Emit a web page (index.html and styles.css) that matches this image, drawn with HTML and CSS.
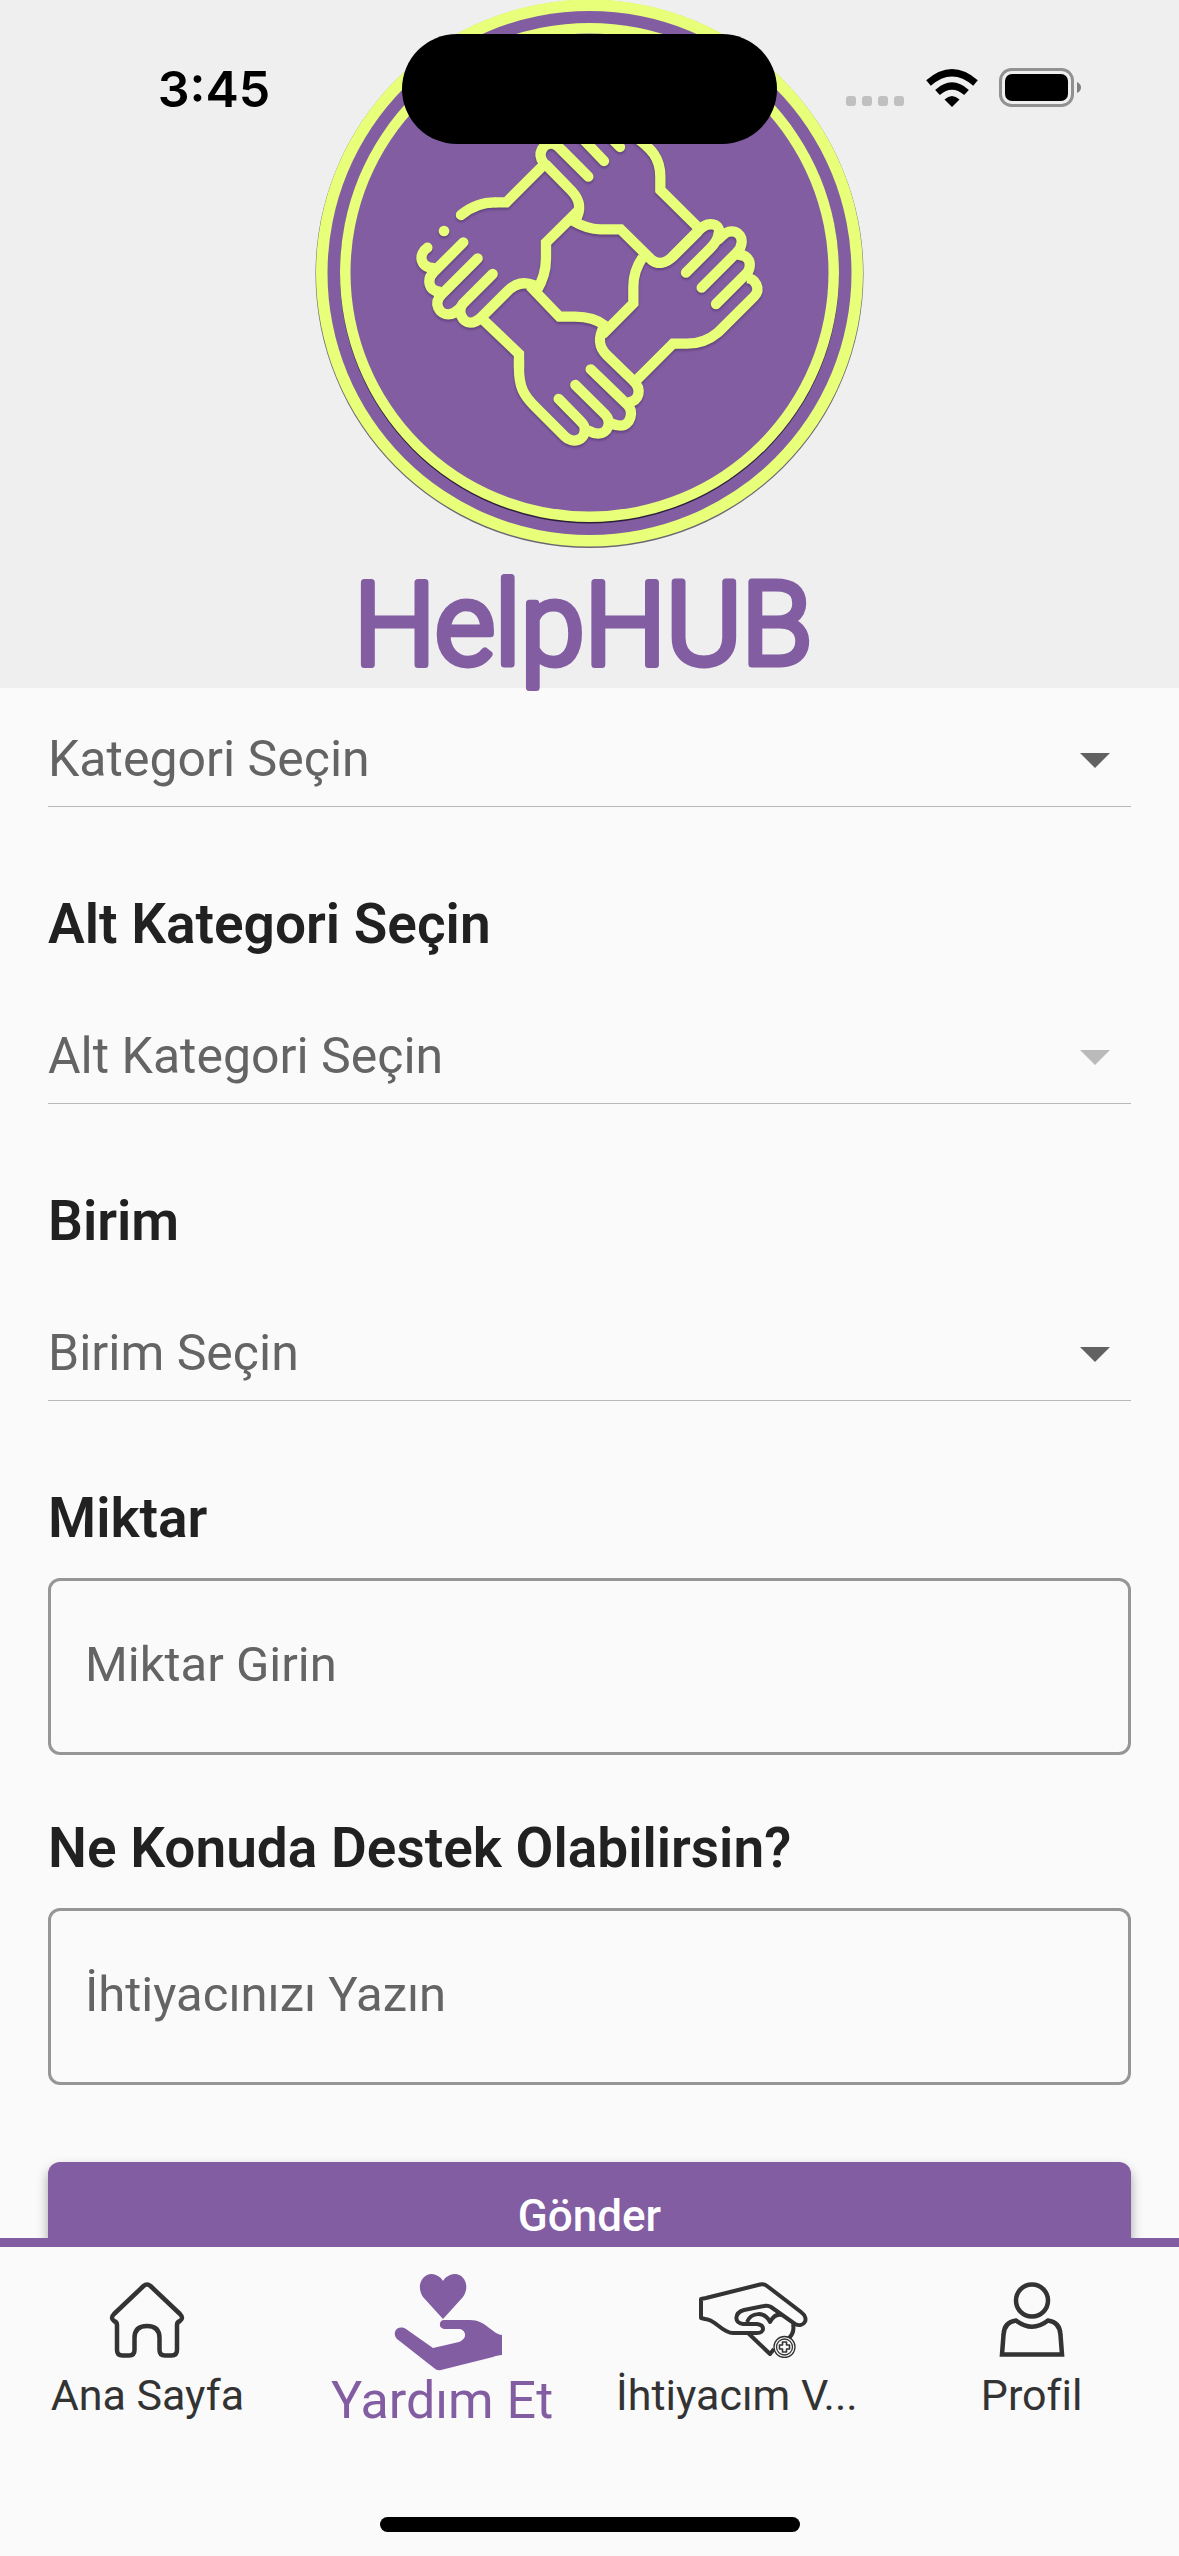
FILE: index.html
```html
<!DOCTYPE html>
<html lang="tr">
<head>
<meta charset="utf-8">
<meta name="viewport" content="width=device-width, initial-scale=1">
<title>HelpHUB</title>
<link rel="stylesheet" href="styles.css">
</head>
<body>
<div class="status">
  <span class="time">3:45</span>
  <span class="island"></span>
  <svg class="signals" viewBox="0 0 238 44" aria-hidden="true">
    <g fill="#c0c0c0"><rect x="0" y="29" width="10" height="10" rx="3"/><rect x="16" y="29" width="10" height="10" rx="3"/><rect x="32" y="29" width="10" height="10" rx="3"/><rect x="48" y="29" width="10" height="10" rx="3"/></g>
    <path d="M106 40 L98.500 32.500 Q106 25.500 113.500 32.500 Z" fill="#000"/>
    <g fill="none" stroke="#000" stroke-width="7"><path d="M91.500 25.500 Q106 12.500 120.500 25.500"/><path d="M82.500 16 Q106 -4.500 129.500 16"/></g>
    <rect x="154.500" y="2.500" width="72" height="36" rx="11" fill="none" stroke="#919191" stroke-width="3"/>
    <rect x="159" y="7" width="63" height="27" rx="7"/>
    <path d="M231 15 Q235 17 235 20.500 T231 26 Z" fill="#808080"/>
  </svg>
</div>

<header class="header">
  <svg class="logo" viewBox="315 0 549 688" role="img" aria-label="HelpHUB">
    <circle cx="589.500" cy="274" r="274" fill="#6d6672"/>
    <circle cx="589.500" cy="273" r="273.500" fill="#e8ff79"/>
    <circle cx="589.500" cy="273" r="262" fill="#825da2"/>
    <circle cx="589.500" cy="274" r="249.500" fill="#2d1f3c"/>
    <circle cx="589.500" cy="272.500" r="249.500" fill="#e8ff79"/>
    <circle cx="589.500" cy="272.500" r="239" fill="#825da2"/>
    <g class="hands" fill="none" stroke="#e8ff79" stroke-width="31">
      <g transform="translate(400 130) scale(.33333)">
        <path stroke-linecap="round" d="M183 255C215 228 245 217 285 217"/>
        <path d="M284 217H319L435 101"/>
        <circle cx="132" cy="303" r="16" fill="#e8ff79" stroke="none"/>
        <path stroke-linecap="round" d="M82 353C54 372 60 412 98 414"/>
        <path stroke-linecap="round" d="M190 337L101 426C78 450 88 482 115 484"/>
        <path stroke-linecap="round" d="M233 385L125 493C98 520 118 553 145 553C160 553 167 546 177 537"/>
        <path stroke-linecap="round" d="M278 432L190 520C170 542 187 578 211 578C226 578 234 572 245 561L320 486C345 460 372 453 402 466"/>
        <path d="M390 468L478 560H525C560 560 590 567 615 587"/>
        <path d="M240 560L357 672V715"/>
        <path d="M437 103L515 183C545 215 542 245 524 274"/>
        <path d="M518 272C545 288 570 298 600 298H662L755 390C775 405 798 400 818 380L895 303"/>
        <path d="M534 243L438 338V385C438 420 430 450 410 482"/>
        <path stroke-linecap="round" d="M437 105L430 97C410 70 430 40 455 41C468 42 475 50 485 60L565 140"/>
      </g>
      <g transform="translate(580 130) scale(.33333)">
        <path stroke-linecap="round" d="M0 18L72 93M80 10L120 51"/>
        <path d="M165 20C215 55 241 85 241 140V180L358 296"/>
        <path stroke-linecap="round" d="M278 380L355 303C385 268 425 284 416 310C414 330 400 346 390 356L318 428"/>
        <path stroke-linecap="round" d="M415 328L428 316C450 293 487 305 485 337C484 352 478 360 470 368L365 473"/>
        <path stroke-linecap="round" d="M480 375C498 375 512 390 509 410C508 420 503 428 495 435L408 522"/>
        <path d="M500 444C525 444 545 477 522 500L414 607C385 632 355 641 320 641H279L168 752"/>
        <path d="M188 382C165 415 160 440 160 470V520L67 614"/>
      </g>
      <g transform="translate(480 280) scale(.33333)">
        <path stroke-linecap="round" d="M117 240V265C117 320 130 345 165 380L255 470C275 490 317 485 314 445C314 436 308 430 300 422L236 357"/>
        <path stroke-linecap="round" d="M286 315L375 403C398 428 382 461 355 461C345 461 338 459 328 453"/>
        <path stroke-linecap="round" d="M332 268L440 372C465 395 450 437 422 437C412 437 404 435 394 430"/>
        <path d="M374 136C352 175 356 201 380 225L460 302C487 328 478 365 444 367"/>
      </g>
    </g>
    <text class="wordmark" x="583" y="664" text-anchor="middle">HelpHUB</text>
  </svg>
</header>

<main class="content">
  <form class="form">
    <div class="picker">
      <select aria-label="Kategori"><option>Kategori Seçin</option></select>
    </div>
    <label class="label" for="sub">Alt Kategori Seçin</label>
    <div class="picker picker-off">
      <select id="sub" disabled><option>Alt Kategori Seçin</option></select>
    </div>
    <label class="label" for="unit">Birim</label>
    <div class="picker">
      <select id="unit"><option>Birim Seçin</option></select>
    </div>
    <label class="label" for="amount">Miktar</label>
    <input class="field" id="amount" type="text" placeholder="Miktar Girin">
    <label class="label label-next" for="need">Ne Konuda Destek Olabilirsin?</label>
    <input class="field" id="need" type="text" placeholder="İhtiyacınızı Yazın">
    <button class="submit" type="submit">Gönder</button>
  </form>
</main>

<footer class="footer">
  <nav class="tabs">
    <a class="tab" href="#home">
      <svg width="76" height="76" viewBox="0 0 76 76" fill="none" stroke="#333" stroke-width="4.500" stroke-linejoin="round"><path d="M34.500 4Q38 1 41.500 4L71 32Q75 36 71 39Q68 40 68 43V68Q68 73.500 62.500 73.500H56Q50.500 73.500 50.500 68V56Q50.500 44 38 44T25.500 56V68Q25.500 73.500 20 73.500H13.500Q8 73.500 8 68V43Q8 40 5 39Q1 36 5 32Z"/></svg>
      <span>Ana Sayfa</span>
    </a>
    <a class="tab tab-active" href="#give" aria-current="page">
      <svg width="120" height="98" viewBox="-12 0 120 98" fill="#825da2"><path d="M49 46L29 24C20 10 32-3 42 2Q47 4 49 8Q51 4 56 2C67-3 78 10 69 24Z"/><path d="M3 66C-3 59 4 51 12 56L39 75L65 69C75 65 71 56 65 56H50C44 55 45 47 50 47H76C92 47 98 61 108 62V82C105 82 101 83 99 84L47 97Q43 98 40 95Z"/></svg>
      <span>Yardım Et</span>
    </a>
    <a class="tab" href="#need-help">
      <svg width="142" height="76" viewBox="-32 0 142 76" fill="none" stroke="#333" stroke-width="4" stroke-linejoin="round"><path d="M3 17L8 16L62 2.500Q66 1.500 69 4L103 30C112 37 106 46 97 42L73 25Q70 23 66 24L46 28C36 31 36 41 45 42H59C67 43 67 51 59 51H35C24 51 17 37 7 37L3 36Z"/><path d="M49 40C53 30 67 29 72 40Q77 31 84 33M95 42Q97 51 90 57M50 51L72 72L76 67" /><circle cx="86.500" cy="65" r="10.500" fill="#fafafa" stroke-width="1.300"/><circle cx="86.500" cy="65" r="8" stroke-width="1.300"/><path stroke-width="1.600" d="M84.500 60h4v3h3v4h-3v3h-4v-3h-3v-4h3z"/></svg>
      <span>İhtiyacım V...</span>
    </a>
    <a class="tab" href="#profile">
      <svg width="66" height="76" viewBox="0 0 66 76" fill="none" stroke="#333" stroke-width="4.500"><circle cx="33" cy="18.500" r="16"/><path d="M17 38.500Q5 40 4.500 53L3 72.500H63L61.500 53Q61 40 49 38.500Q33 51 17 38.500Z"/></svg>
      <span>Profil</span>
    </a>
  </nav>
  <div class="home-bar"></div>
</footer>
</body>
</html>
```
FILE: styles.css
```css
* { box-sizing: border-box; }
body {
  margin: 0;
  height: 100vh;
  display: flex;
  flex-direction: column;
  background: #fafafa;
  color: #212121;
  font-family: Roboto, "Liberation Sans", sans-serif;
}
.status {
  position: absolute;
  top: 34px;
  left: 0;
  right: 0;
  display: grid;
  grid-template-columns: 1fr 375px 1fr;
  align-items: center;
}
.time {
  padding-left: 26px;
  text-align: center;
  font: 600 50px/60px Inter, sans-serif;
  color: #000;
}
.island {
  height: 110px;
  border-radius: 55px;
  background: #000;
}
.signals {
  width: 238px;
  margin-left: 69px;
}
.header {
  flex: none;
  display: flex;
  justify-content: center;
  background: #efefef;
}
.logo {
  display: block;
  width: 549px;
  overflow: visible;
}
.hands { filter: drop-shadow(0 2px 1px rgba(40, 20, 60, .35)); }
.wordmark {
  font: 300 115px Roboto, sans-serif;
  fill: #825da2;
  stroke: #825da2;
  stroke-width: 7px;
  stroke-linejoin: round;
}
.content {
  flex: 1;
  min-height: 0;
  overflow-y: auto;
  scrollbar-width: none;
}
.form {
  display: flex;
  flex-direction: column;
  padding: 22px 48px 48px;
}
.picker {
  position: relative;
  height: 97px;
  border-bottom: 1px solid #b8b8b8;
}
.picker::after {
  content: "";
  position: absolute;
  right: 21px;
  top: 43px;
  border: 15px solid transparent;
  border-top-color: #616161;
  border-bottom: 0;
  pointer-events: none;
}
.picker-off::after { border-top-color: #bababa; }
.picker select {
  appearance: none;
  width: 100%;
  height: 100%;
  padding: 2px 0 0;
  border: 0;
  background: none;
  font: 400 50px Roboto, sans-serif;
  color: #646464;
  opacity: 1;
}
.label {
  margin: 85px 0 51px;
  font-size: 55px;
  font-weight: 600;
  line-height: 64px;
}
.label:has(+ .field) { margin-bottom: 28px; }
.label-next { margin-top: 61px; }
.field {
  width: 100%;
  height: 177px;
  padding: 0 34px 5px;
  border: 3px solid #969696;
  border-radius: 12px;
  background: transparent;
  font: 400 49px Roboto, sans-serif;
  color: #212121;
}
.field::placeholder { color: #646464; opacity: 1; }
.submit {
  height: 108px;
  margin-top: 77px;
  border: 0;
  border-radius: 12px;
  background: #825da2;
  box-shadow: 0 6px 12px rgba(0, 0, 0, .35);
  color: #fff;
  font: 500 44px Roboto, sans-serif;
}
.footer {
  position: relative;
  flex: none;
  border-top: 9px solid #825da2;
  background: #fafafa;
}
.tabs {
  display: grid;
  grid-template-columns: repeat(4, 1fr);
  padding-top: 26px;
}
.tab {
  display: flex;
  flex-direction: column;
  align-items: center;
  padding-top: 9px;
  color: #333;
  font-size: 43px;
  line-height: 56px;
  text-decoration: none;
  white-space: nowrap;
}
.tab span { margin-top: 9px; }
.tab-active {
  padding-top: 0;
  color: #825da2;
  font-size: 52px;
}
.tab-active span { margin-top: 2px; }
.home-bar {
  width: 420px;
  height: 15px;
  margin: 88px auto 24px;
  border-radius: 8px;
  background: #000;
}
```
